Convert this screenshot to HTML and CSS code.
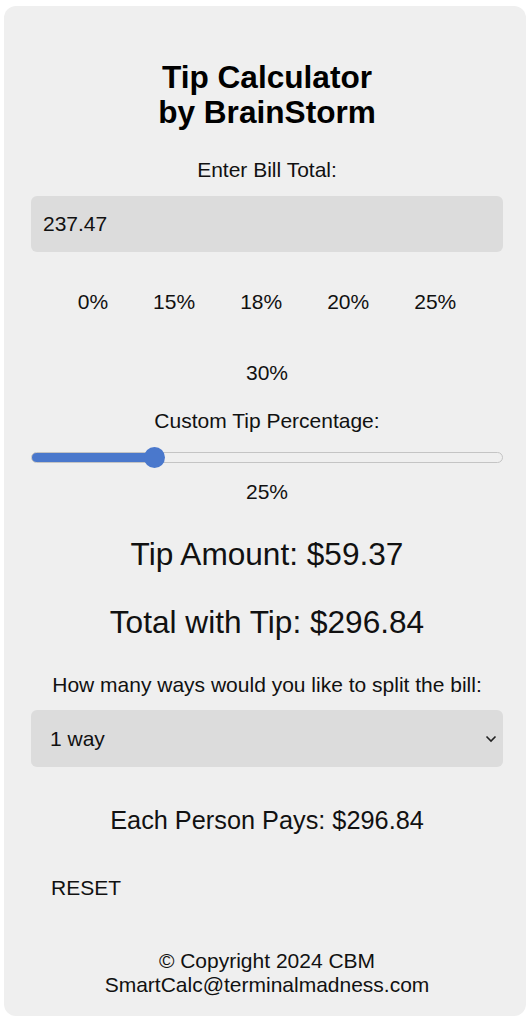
FILE: index.html
```html
<!DOCTYPE html>
<html lang="en">
<head>
    <meta charset="UTF-8">
    <meta name="viewport" content="width=device-width, initial-scale=1.0">
    <title>Tip Calculator by BrainStorm</title>
    <link rel="stylesheet" href="styles.css">
</head>
<body>
    <div class="calc-container">
        <h1 class="calc-title">Tip Calculator<br>by BrainStorm</h1>

        <label for="bill" class="field-label">Enter Bill Total:</label>
        <input type="text" id="bill" class="bill-input" value="237.47">

        <!-- Preset tip buttons -->
        <div class="tip-buttons">
            <button class="tip-btn">0%</button>
            <button class="tip-btn">15%</button>
            <button class="tip-btn">18%</button>
            <button class="tip-btn">20%</button>
            <button class="tip-btn">25%</button>
            <button class="tip-btn">30%</button>
        </div>

        <label for="custom" class="field-label custom-label">Custom Tip Percentage:</label>
        <input type="range" id="custom" class="tip-slider" min="0" max="100" value="25">
        <div class="slider-value">25%</div>

        <div class="result tip-amount">Tip Amount: $59.37</div>
        <div class="result total-amount">Total with Tip: $296.84</div>

        <label for="split" class="field-label split-label">How many ways would you like to split the bill:</label>
        <div class="select-wrap">
            <select id="split" class="split-select">
                <option>1 way</option>
                <option>2 ways</option>
                <option>3 ways</option>
                <option>4 ways</option>
            </select>
            <svg class="select-arrow" width="12" height="8" viewBox="0 0 12 8">
                <path d="M1.5 1.5 L6 6 L10.5 1.5" fill="none" stroke="#222" stroke-width="1.6"/>
            </svg>
        </div>

        <div class="each-pays">Each Person Pays: $296.84</div>

        <div class="reset-row">
            <button class="reset-btn">RESET</button>
        </div>

        <footer class="calc-footer">
            &copy; Copyright 2024 CBM<br>
            SmartCalc@terminalmadness.com
        </footer>
    </div>
</body>
</html>
```

FILE: styles.css
```css
body {
    font-family: "Liberation Sans", Arial, sans-serif;
    margin: 6px 4px;
    background-color: #ffffff;
    color: #111;
}

.calc-container {
    background-color: #efefef;
    border-radius: 12px;
    padding: 54px 23px 19px 27px;
    display: flex;
    flex-direction: column;
    text-align: center;
}

.calc-title {
    font-size: 31.6px;
    line-height: 35px;
    font-weight: bold;
    margin: 0;
    color: #000;
}

.field-label {
    display: block;
    font-size: 21px;
    line-height: 24px;
    margin-top: 28px;
}

.bill-input {
    margin-top: 14px;
    height: 56px;
    box-sizing: border-box;
    width: 100%;
    border: none;
    border-radius: 6px;
    background-color: #dcdcdc;
    padding: 0 12px;
    font-family: inherit;
    font-size: 21px;
    color: #111;
    outline: none;
}

.tip-buttons {
    margin-top: 18px;
    display: flex;
    flex-wrap: wrap;
    justify-content: center;
    gap: 7px 5px;
}

.tip-btn,
.reset-btn {
    background: none;
    border: none;
    padding: 20px;
    font-family: inherit;
    font-size: 21px;
    line-height: 24px;
    color: #111;
    cursor: pointer;
}

.custom-label {
    margin-top: 4px;
}

.tip-slider {
    -webkit-appearance: none;
    appearance: none;
    margin: 13px 0 0;
    width: 100%;
    height: 22px;
    background: transparent;
}

.tip-slider::-webkit-slider-runnable-track {
    height: 11px;
    border-radius: 6px;
    border: 1px solid #c4c4c4;
    box-sizing: border-box;
    background: linear-gradient(to right, #4a78cc 0%, #4a78cc 26%, #efefef 26%);
}

.tip-slider::-webkit-slider-thumb {
    -webkit-appearance: none;
    width: 21px;
    height: 21px;
    border-radius: 50%;
    background: #4a78cc;
    margin-top: -6px;
}

.slider-value {
    margin-top: 12px;
    font-size: 21px;
    line-height: 24px;
}

.result {
    font-size: 31.6px;
    line-height: 36px;
    margin-top: 32px;
}

.split-label {
    margin-top: 33px;
}

.select-wrap {
    position: relative;
    margin-top: 13px;
}

.split-select {
    -webkit-appearance: none;
    appearance: none;
    width: 100%;
    height: 57px;
    border: none;
    border-radius: 6px;
    background-color: #dcdcdc;
    padding: 0 19px;
    font-family: inherit;
    font-size: 21px;
    color: #111;
    display: block;
}

.select-arrow {
    position: absolute;
    right: 6px;
    top: 25px;
}

.each-pays {
    font-size: 25.3px;
    line-height: 30px;
    margin-top: 38px;
}

.reset-row {
    margin-top: 21px;
    text-align: left;
}

.calc-footer {
    margin-top: 29px;
    font-size: 21px;
    line-height: 24px;
}
```
